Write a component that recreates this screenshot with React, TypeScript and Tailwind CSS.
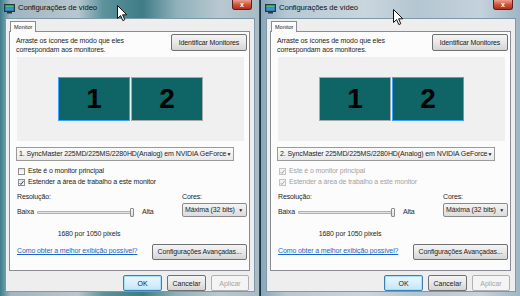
import React from "react";

const F = { fontFamily: '"Liberation Sans", Arial, sans-serif' };

function Cursor() {
  return (
    <svg width="11" height="17" viewBox="0 0 11 17">
      <path d="M0.5 0.5 L0.5 13.5 L3.6 10.6 L5.8 15.6 L7.8 14.7 L5.6 9.8 L9.8 9.8 Z" fill="#fff" stroke="#111" strokeWidth="1" strokeLinejoin="round" />
    </svg>
  );
}

function TitleIcon() {
  return (
    <svg width="11" height="10" viewBox="0 0 11 10">
      <rect x="0.5" y="0.5" width="10" height="7" fill="#2a6d8a" stroke="#1d3b4f" />
      <rect x="1.5" y="1.5" width="8" height="2" fill="#4fc06a" />
      <rect x="1.5" y="4" width="8" height="2.5" fill="#3a8fd0" />
      <rect x="3" y="8" width="5" height="1.5" fill="#334" />
    </svg>
  );
}

function Check({ checked, disabled }: { checked?: boolean; disabled?: boolean }) {
  return (
    <div
      className={
        "w-[7px] h-[7px] border flex items-center justify-center shrink-0 " +
        (disabled ? "border-[#c4c4c4] bg-[#f2f2f2]" : "border-[#8e8f8f] bg-linear-to-b from-[#e6e6e6] to-[#ffffff]")
      }
    >
      {checked && (
        <svg width="6" height="6" viewBox="0 0 6 6">
          <path d="M0.8 3.2 L2.3 4.8 L5.3 0.8" fill="none" stroke={disabled ? "#a8a8a8" : "#2a3a6a"} strokeWidth="1.2" />
        </svg>
      )}
    </div>
  );
}

function Arrow() {
  return <span className="text-[5px] text-[#222] leading-none shrink-0">▼</span>;
}

const btnBase =
  "h-[16px] border rounded-[2px] flex items-center justify-center text-[7px] leading-none whitespace-nowrap";
const btnNormal =
  btnBase + " border-[#707070] bg-linear-to-b from-[#f4f4f4] via-[#e8e8e8] to-[#d4d4d4] text-[#1a1a1a]";

function Window({ selected, variant }: { selected: 1 | 2; variant: "a" | "b" }) {
  const frame =
    variant === "a"
      ? "bg-[linear-gradient(90deg,#3d7c8a_0%,#9fb5c0_4%,#b8c7cf_30%,#5b929b_40%,#3f7c86_55%,#8fb0ba_68%,#b9c8d0_85%,#a8bcc6_100%)]"
      : "bg-[linear-gradient(90deg,#8aa6b7_0%,#b7c8d3_10%,#c9d6de_40%,#b4c6d2_60%,#c4d2db_85%,#9eb6c5_100%)]";
  const disabled = selected === 2;
  return (
    <div className={"w-[259px] h-[296px] flex flex-col " + frame} style={F}>
      {/* title bar */}
      <div className="h-[18px] flex items-start shrink-0">
        <div className="pl-[4px] pt-[4px]">
          <TitleIcon />
        </div>
        <div className="pl-[3px] pt-[3px] text-[7.7px] text-[#111] tracking-[-0.1px] leading-[10px]">
          Configurações de vídeo
        </div>
        <div className="flex-1" />
        <div className="mr-[7px] w-[20px] h-[10px] rounded-b-[3px] border border-t-0 border-[#5a2020] bg-linear-to-b from-[#e8a08e] via-[#d2553c] to-[#b42b1a] flex items-center justify-center">
          <span className="text-white text-[7px] font-bold leading-none">x</span>
        </div>
      </div>
      {/* body row */}
      <div className="flex flex-1 pl-[5px] pr-[4px]">
        <div className="flex-1 bg-[#eeeeee] flex flex-col pt-[2px] pl-[3px] pr-[4px] border border-[#7d98a6]">
          <div className="flex pl-[1px] -mb-[1px] relative z-10">
            <div className="h-[11px] px-[3px] border border-b-0 border-[#898c95] bg-[#fcfcfc] text-[5.5px] text-[#222] flex items-center">
              Monitor
            </div>
          </div>
          <div className="h-[240px] border border-[#898c95] bg-[#fcfcfc] flex flex-col text-[7px] text-[#1e1e1e] tracking-[-0.12px]">
            {/* row 1 */}
            <div className="flex justify-between mt-[2px]">
              <div className="pl-[6px] pt-[2px] leading-[9px]">
                Arraste os ícones de modo que eles
                <br />
                correspondam aos monitores.
              </div>
              <div className={btnNormal + " w-[76px] mr-[2px] h-[17px]"}>Identificar Monitores</div>
            </div>
            {/* monitor area */}
            <div className="ml-[7px] mt-[3px] w-[227px] h-[84px] bg-[#f0f0f0] flex items-center justify-center gap-[1px]">
              {[1, 2].map((n) => (
                <div
                  key={n}
                  className={
                    "w-[72px] h-[44px] bg-[#0f6565] flex items-center justify-center border-[1.5px] " +
                    (n === selected ? "border-[#3da1ff]" : "border-[#a8a8a8]")
                  }
                >
                  <span className="text-[28px] font-bold text-black leading-none">{n}</span>
                </div>
              ))}
            </div>
            {/* dropdown */}
            <div className="ml-[6px] mt-[6px] w-[218px] h-[14px] border border-[#9a9a9a] bg-linear-to-b from-[#fafafa] to-[#e9e9e9] flex items-center pl-[2px] pr-[4px] justify-between overflow-hidden">
              <span className="text-[7px] tracking-[-0.1px] whitespace-nowrap">
                {selected}. SyncMaster 225MD/225MS/2280HD(Analog) em NVIDIA GeForce
              </span>
              <Arrow />
            </div>
            {/* checkboxes */}
            <div className={"ml-[8px] mt-[5px] flex flex-col " + (disabled ? "text-[#a3a3a3]" : "")}>
              <div className="h-[11px] flex items-center gap-[3px]">
                <Check checked={disabled} disabled={disabled} />
                <span>Este é o monitor principal</span>
              </div>
              <div className="h-[11px] flex items-center gap-[3px]">
                <Check checked disabled={disabled} />
                <span>Estender a área de trabalho a este monitor</span>
              </div>
            </div>
            {/* resolution / colors */}
            <div className="flex mt-[4px]">
              <div className="w-[152px] pl-[7px] flex flex-col">
                <div className="h-[9px] leading-[9px]">Resolução:</div>
                <div className="h-[14px] mt-[4px] flex items-center">
                  <span>Baixa</span>
                  <div className="ml-[3px] w-[100px] h-[14px] flex items-center">
                    <div className="w-[97px] h-[3px] border border-[#b0b0b0] bg-[#e4e4e4] rounded-[1px]" />
                    <div className="w-[4px] h-[9px] border border-[#8a8a8a] bg-linear-to-b from-[#fbfbfb] to-[#dcdcdc] rounded-[1px] -ml-[4px]" />
                  </div>
                  <span className="ml-[5px]">Alta</span>
                </div>
                <div className="mt-[10px] text-center pr-[1px]">1680 por 1050 pixels</div>
              </div>
              <div className="flex flex-col ml-[20px]">
                <div className="h-[9px] leading-[9px]">Cores:</div>
                <div className="mt-[2px] w-[65px] h-[14px] border border-[#8a8a8a] bg-linear-to-b from-[#f4f4f4] to-[#dcdcdc] rounded-[2px] flex items-center justify-between pl-[2px] pr-[3px]">
                  <span className="whitespace-nowrap">Máxima (32 bits)</span>
                  <Arrow />
                </div>
              </div>
            </div>
            {/* link row */}
            <div className="flex items-center justify-between mt-[4px]">
              <span className="ml-[7px] text-[#1c64c8] underline whitespace-nowrap">Como obter a melhor exibição possível?</span>
              <div className={btnNormal + " w-[95px] mr-[2px]"}>Configurações Avançadas...</div>
            </div>
          </div>
          {/* bottom buttons */}
          <div className="flex justify-end gap-[5px] mt-[4px] pr-[1px] text-[6px]">
            <div className={btnBase + " w-[39px] h-[13px] border-[#3c7fb1] bg-linear-to-b from-[#eaf6fd] via-[#d9f0fc] to-[#bee6fd] text-[#1a1a1a] text-[6px] shadow-[inset_0_0_0_1px_#a8e0f8]"}>
              OK
            </div>
            <div className={btnNormal + " w-[39px] h-[13px] text-[6px]"}>Cancelar</div>
            <div className={btnBase + " w-[38px] h-[13px] border-[#adb2b5] bg-[#f4f4f4] text-[#a5a5a5] text-[6px]"}>Aplicar</div>
          </div>
        </div>
      </div>
      {/* bottom frame */}
      <div className="h-[6px] shrink-0" />
    </div>
  );
}

export default function App() {
  return (
    <div className="w-[520px] h-[296px] flex relative overflow-hidden bg-[#1f4152]">
      <Window selected={1} variant="a" />
      <div className="w-[2px] h-full bg-[linear-gradient(90deg,#2b5a72,#0e2634)]" />
      <Window selected={2} variant="b" />
      <div className="absolute left-[117px] top-[5px]">
        <Cursor />
      </div>
      <div className="absolute left-[393px] top-[9px]">
        <Cursor />
      </div>
    </div>
  );
}
